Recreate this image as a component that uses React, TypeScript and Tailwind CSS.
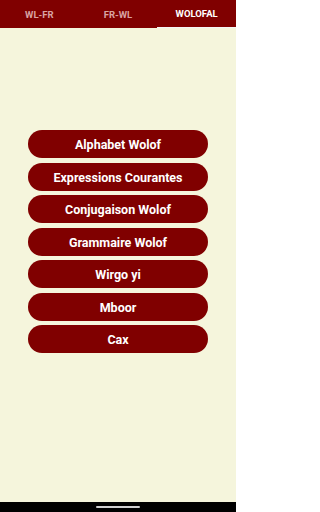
const TABS = ['WL-FR', 'FR-WL', 'WOLOFAL'];

const ITEMS = [
  'Alphabet Wolof',
  'Expressions Courantes',
  'Conjugaison Wolof',
  'Grammaire Wolof',
  'Wirgo yi',
  'Mboor',
  'Cax',
];

export default function App() {
  return (
    <div className="flex h-[512px] w-[236px] flex-col bg-[#f5f5dc] font-['Roboto',sans-serif]">
      <div className="flex h-[28px] shrink-0 bg-[#800000]">
        {TABS.map((t, i) => (
          <div
            key={t}
            className={
              i === 2
                ? 'flex flex-1 items-center justify-center border-b-[1.5px] border-[#f5f5f5] pt-[2px] text-[9.5px] font-bold text-white'
                : 'flex flex-1 items-center justify-center pt-[2px] text-[9.5px] font-bold text-[#d9a3a3]'
            }
          >
            {t}
          </div>
        ))}
      </div>

      <div className="flex flex-1 flex-col items-center gap-[4.5px] pt-[102px]">
        {ITEMS.map((label) => (
          <button
            key={label}
            className="flex h-[28px] w-[180px] items-center justify-center rounded-full bg-[#800000] pt-[3px] text-[12.5px] font-bold text-white"
          >
            {label}
          </button>
        ))}
      </div>

      <div className="flex h-[10px] shrink-0 items-center justify-center bg-black">
        <div className="h-[1.5px] w-[44px] rounded-full bg-[#d0d0d0]" />
      </div>
    </div>
  );
}
